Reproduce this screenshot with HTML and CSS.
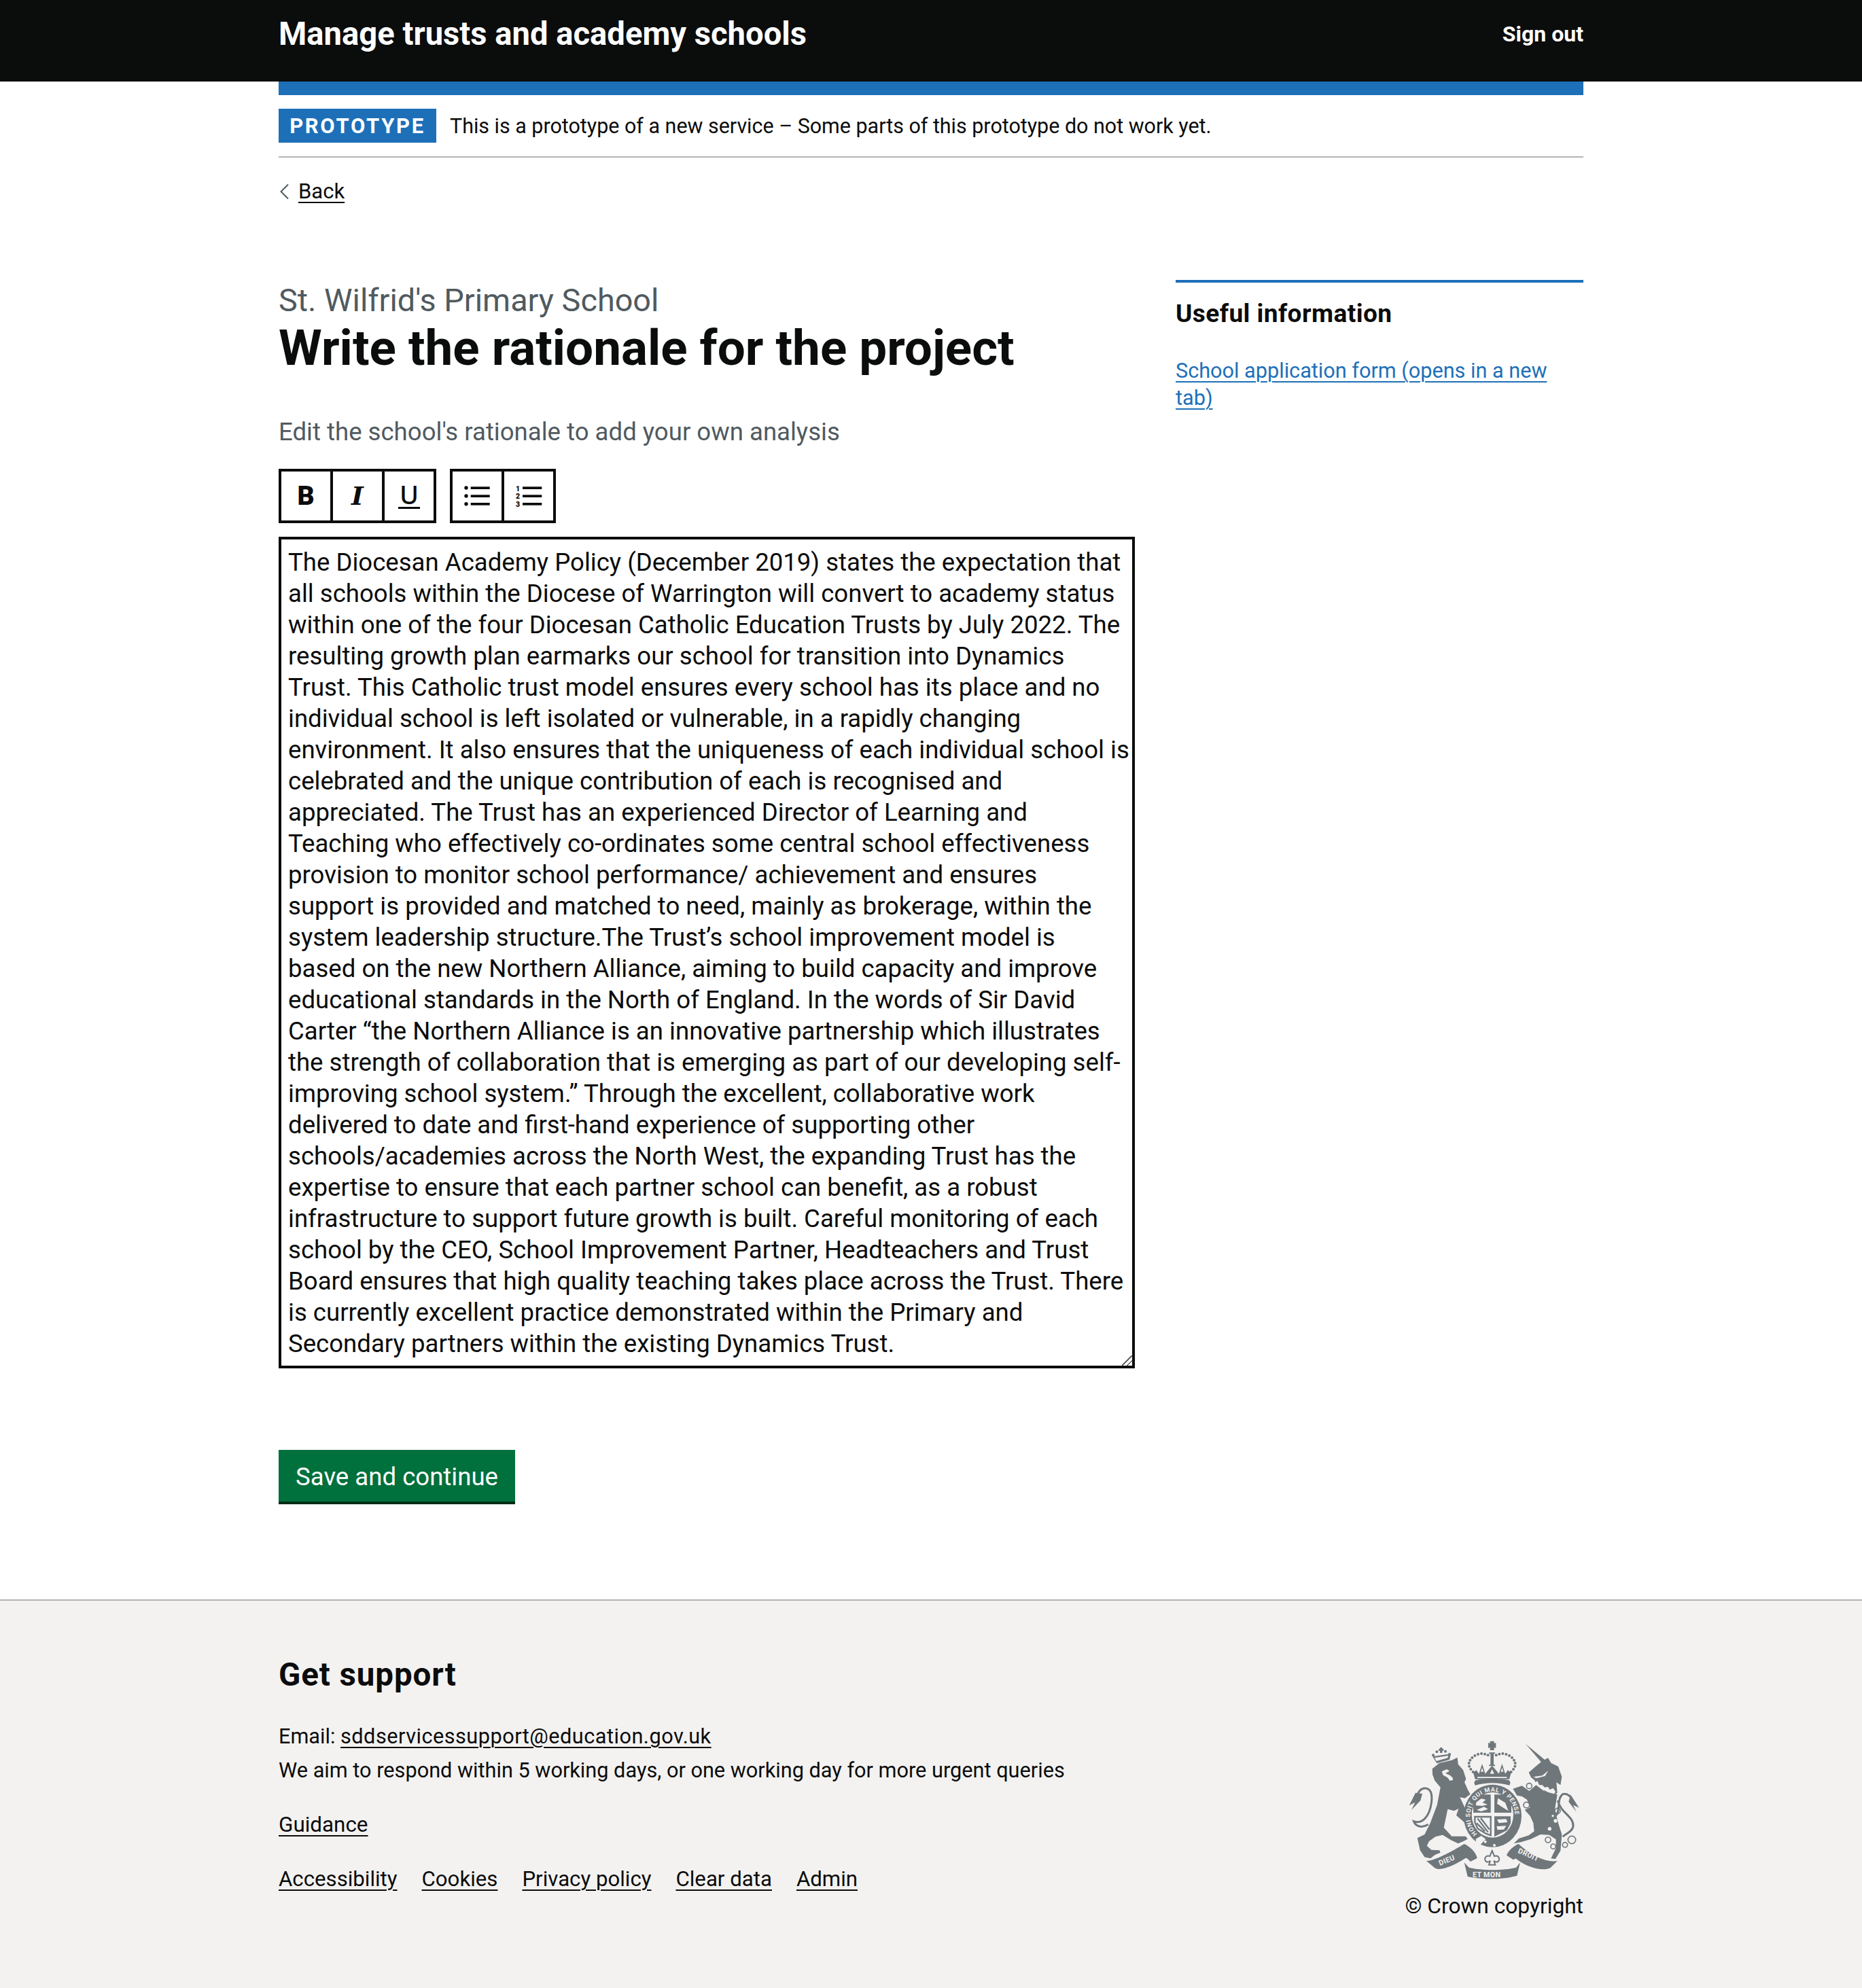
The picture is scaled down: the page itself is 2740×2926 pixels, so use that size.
FILE: index.html
```html
<!DOCTYPE html>
<html lang="en">
<head>
<meta charset="utf-8">
<title>Write the rationale for the project</title>
<link rel="stylesheet" href="styles.css">
</head>
<body>
<header class="site-header">
  <div class="container header-row">
    <a class="service-name" href="#">Manage trusts and academy schools</a>
    <a class="sign-out" href="#">Sign out</a>
  </div>
</header>
<div class="container">
  <div class="phase-banner">
    <strong class="tag">PROTOTYPE</strong>
    <span class="phase-text">This is a prototype of a new service – Some parts of this prototype do not work yet.</span>
  </div>
  <a class="back-link" href="#">
    <svg class="chevron" width="14" height="24" viewBox="0 0 14 24"><path d="M13 1.500 2.500 12 13 22.500" fill="none" stroke="#505a5f" stroke-width="2"/></svg>
    <span class="back-text">Back</span>
  </a>
  <main class="main-grid">
    <div class="main-col">
      <span class="caption">St. Wilfrid's Primary School</span>
      <h1 class="title">Write the rationale for the project</h1>
      <p class="hint">Edit the school's rationale to add your own analysis</p>
      <div class="toolbar">
        <div class="tool-group">
          <button class="tool tool-b" type="button">B</button>
          <button class="tool tool-i" type="button">I</button>
          <button class="tool tool-u" type="button"><span class="u-mark">U</span></button>
        </div>
        <div class="tool-group">
          <button class="tool" type="button" aria-label="Bullet list">
            <svg width="72" height="72" viewBox="0 0 72 72"><circle cx="20" cy="24" r="2.700"/><circle cx="20" cy="36" r="2.700"/><circle cx="20" cy="47.700" r="2.700"/><rect x="26.700" y="22.300" width="28" height="3.700"/><rect x="26.700" y="34.300" width="28" height="3.700"/><rect x="26.700" y="46" width="28" height="3.700"/></svg>
          </button>
          <button class="tool" type="button" aria-label="Numbered list">
            <svg width="72" height="72" viewBox="0 0 72 72"><text class="mini-num" x="20" y="28.500">1</text><text class="mini-num" x="20" y="40.300">2</text><text class="mini-num" x="20" y="52">3</text><rect x="27" y="22.300" width="28.300" height="3.700"/><rect x="27" y="34.300" width="28.300" height="3.700"/><rect x="27" y="46" width="28.300" height="3.700"/></svg>
          </button>
        </div>
      </div>
      <textarea class="rationale" wrap="off" rows="26" spellcheck="false">The Diocesan Academy Policy (December 2019) states the expectation that
all schools within the Diocese of Warrington will convert to academy status
within one of the four Diocesan Catholic Education Trusts by July 2022. The
resulting growth plan earmarks our school for transition into Dynamics
Trust. This Catholic trust model ensures every school has its place and no
individual school is left isolated or vulnerable, in a rapidly changing
environment. It also ensures that the uniqueness of each individual school is
celebrated and the unique contribution of each is recognised and
appreciated. The Trust has an experienced Director of Learning and
Teaching who effectively co-ordinates some central school effectiveness
provision to monitor school performance/ achievement and ensures
support is provided and matched to need, mainly as brokerage, within the
system leadership structure.The Trust’s school improvement model is
based on the new Northern Alliance, aiming to build capacity and improve
educational standards in the North of England. In the words of Sir David
Carter “the Northern Alliance is an innovative partnership which illustrates
the strength of collaboration that is emerging as part of our developing self-
improving school system.” Through the excellent, collaborative work
delivered to date and first-hand experience of supporting other
schools/academies across the North West, the expanding Trust has the
expertise to ensure that each partner school can benefit, as a robust
infrastructure to support future growth is built. Careful monitoring of each
school by the CEO, School Improvement Partner, Headteachers and Trust
Board ensures that high quality teaching takes place across the Trust. There
is currently excellent practice demonstrated within the Primary and
Secondary partners within the existing Dynamics Trust.</textarea>
      <button class="save" type="button">Save and continue</button>
    </div>
    <aside class="side-col">
      <h2 class="side-title">Useful information</h2>
      <a class="side-link" href="#">School application form (opens in a new tab)</a>
    </aside>
  </main>
</div>
<footer class="site-footer">
  <div class="container footer-row">
    <div class="footer-meta">
      <h2 class="footer-title">Get support</h2>
      <p class="footer-line">Email: <a class="footer-link footer-email" href="#">sddservicessupport@education.gov.uk</a></p>
      <p class="footer-line footer-note">We aim to respond within 5 working days, or one working day for more urgent queries</p>
      <p class="footer-line footer-guidance"><a class="footer-link" href="#">Guidance</a></p>
      <ul class="footer-links">
        <li><a class="footer-link" href="#">Accessibility</a></li>
        <li><a class="footer-link" href="#">Cookies</a></li>
        <li><a class="footer-link" href="#">Privacy policy</a></li>
        <li><a class="footer-link" href="#">Clear data</a></li>
        <li><a class="footer-link" href="#">Admin</a></li>
      </ul>
    </div>
    <div class="footer-crest">
      <svg class="crest" width="253.330" height="206.670" viewBox="100 60 760 620" role="img" aria-label="Royal coat of arms">
        <!-- Royal crown -->
        <path class="cf" d="M459 68h18v10l8-3v24l-8-3v12h-18v-12l-8 3V75l8 3z"/>
        <path class="cf" d="M455 118h26v6h-6v48h6v6h-26v-6h6v-48h-6z"/>
        <g class="cf">
          <circle cx="450" cy="130" r="6"/><circle cx="436" cy="125" r="6"/><circle cx="421" cy="123" r="6"/><circle cx="406" cy="126" r="6"/><circle cx="392" cy="132" r="6"/><circle cx="380" cy="141" r="6"/><circle cx="371" cy="152" r="6"/><circle cx="366" cy="165" r="6"/><circle cx="367" cy="179" r="6"/><circle cx="374" cy="192" r="6"/><circle cx="384" cy="204" r="6"/>
          <circle cx="486" cy="130" r="6"/><circle cx="500" cy="125" r="6"/><circle cx="515" cy="123" r="6"/><circle cx="530" cy="126" r="6"/><circle cx="544" cy="132" r="6"/><circle cx="556" cy="141" r="6"/><circle cx="565" cy="152" r="6"/><circle cx="570" cy="165" r="6"/><circle cx="569" cy="179" r="6"/><circle cx="562" cy="192" r="6"/><circle cx="552" cy="204" r="6"/>
        </g>
        <path class="cf" d="M385 208 398 196 410 212 424 168 438 212 454 192 468 176 482 192 498 212 512 168 526 212 538 196 552 208 544 236H393Z"/>
        <path class="cl" d="M403 226h130v5H403zM424 185l6 18h-12zM512 185l6 18h-12zM468 192l9 20h-18z"/>
        <path class="cf" d="M398 240c40-8 100-8 142 0 10 3 10 17 4 23-45-14-105-14-150 0-7-6-6-20 4-23Z"/>
        <!-- Lion -->
        <path class="cf" d="M204 190 235 165 290 152 315 140 318 170 340 195 353 235 346 250 362 285 372 302 348 320 326 316 348 362 368 405 350 432 338 420 310 396 320 366 300 376 272 368 255 450 290 488 352 488 360 500 340 511 318 520 286 505 250 482 218 490 190 510 180 530 200 548 236 550 240 560 216 570 196 586 170 580 150 550 138 496 170 480 195 430 225 350 240 272 215 242 205 215Z"/>
        <path class="cl" d="M246 202 268 192 280 200 262 210 284 220 296 240 282 242 270 228 252 218ZM272 220 292 226 296 240 280 242Z"/>
        <path class="cf" d="M205 136 286 124 280 150 224 166Z"/>
        <path class="cl" d="M214 142 274 132 272 142 222 156Z"/>
        <g class="cf"><circle cx="208" cy="130" r="6"/><circle cx="224" cy="115" r="6"/><circle cx="243" cy="110" r="6"/><circle cx="262" cy="113" r="6"/><circle cx="280" cy="126" r="6"/></g>
        <path class="cf" d="M238 96h10v6h6v8h-6v10h-10v-10h-6v-8h6z"/>
        <path class="cs" d="M186 436C150 458 126 436 122 422 160 436 192 400 200 340 206 300 196 276 172 276 152 276 140 296 134 318"/>
        <path class="cf" d="M130 296 102 352 128 338 112 372 152 330 160 300Z"/>
        <!-- Unicorn -->
        <path class="cf" d="M616 80 700 150 688 164Z"/>
        <path class="cf" d="M630 206 660 180 690 155 715 142 728 164 760 180 776 225 770 262 752 250 756 296 730 316 700 300 702 296 690 272 665 262 655 240 640 228Z"/>
        <path class="cl" d="M650 226 690 220 716 198 702 222 664 232Z"/>
        <path class="cl" d="M658 250 668 244 676 262 690 262 700 272 715 270 722 282 738 276 748 292 738 306 700 286 660 268Z"/>
        <path class="cf" d="M560 278 600 265 632 288 662 262 700 290 756 304 745 370 760 430 776 480 770 552 748 588 728 586 750 540 750 502 720 482 682 480 640 500 596 514 564 520 586 498 630 484 654 466 650 430 636 398 612 372 636 360 622 326 600 312 578 308Z"/>
        <g class="cl"><circle cx="722" cy="455" r="8"/><circle cx="748" cy="420" r="8"/><circle cx="736" cy="398" r="5"/></g>
        <g class="ch"><circle cx="632" cy="266" r="12"/><circle cx="620" cy="350" r="13"/><circle cx="757" cy="376" r="12"/><circle cx="715" cy="504" r="12"/><circle cx="738" cy="533" r="11"/><circle cx="790" cy="526" r="11"/><circle cx="820" cy="504" r="17"/></g>
        <path class="cs" d="M748 398C772 380 752 320 780 302 800 296 818 315 830 340M758 330C770 385 830 400 826 445 820 470 795 475 780 490"/>
        <path class="cf" d="M814 304 852 362 826 350 840 380 806 336Z"/>
        <!-- Garter and shield -->
        <ellipse class="cf" cx="470" cy="398" rx="128" ry="138"/>
        <ellipse class="cl" cx="470" cy="394" rx="92" ry="100"/>
        <path class="cf" d="M385 304H462V384H385ZM478 304H553V384H478ZM478 400H550V430L534 462 478 490Z"/>
        <path class="cs-thin" d="M392 402H462V484L440 476 404 454 392 425ZM404 410 450 470M418 408 456 458M400 430 436 466"/>
        <path class="cl" d="M398 338 420 322 440 326 426 340 448 348 424 354 396 352ZM400 372 432 358 450 368 420 378ZM494 320 526 340 540 376 514 360 490 344ZM490 414 530 412 536 426 498 430ZM488 444 530 442 520 458 492 460Z"/>
        <path id="garter-path" class="none" d="M406 481A99 108 0 1 1 534 481"/>
        <text class="garter-text"><textPath href="#garter-path" startOffset="1%">HONI SOIT QUI MAL Y PENSE</textPath></text>
        <circle class="cl" cx="438" cy="512" r="6"/><circle class="cl" cx="478" cy="528" r="6"/>
        <path class="cl" d="M396 500 420 486 440 500 414 528 398 520Z"/>
        <!-- Fleur de lis -->
        <path class="ce" d="M468 552 478 576C498 570 505 590 494 600 486 604 480 600 476 596L482 614H454L460 596C456 600 450 604 442 600 431 590 438 570 458 576Z"/>
        <!-- Motto ribbon -->
        <path class="cf" d="M178 597C220 595 290 555 345 522 375 535 400 565 402 585L372 600C362 588 354 582 350 585 310 612 240 645 215 628Z"/>
        <path class="cf" d="M345 604 366 626C420 640 520 640 574 626L592 604 578 662C520 680 420 680 360 666Z"/>
        <path class="cf" d="M756 597C710 605 640 575 585 522 560 530 535 560 532 572L562 592 572 586C620 625 690 645 725 628Z"/>
        <text class="motto" transform="translate(238 618) rotate(-22)">DIEU</text>
        <text class="motto" x="382" y="668">ET MON</text>
        <text class="motto" transform="translate(580 560) rotate(24)">DROIT</text>
      </svg>
      <p class="copyright">© Crown copyright</p>
    </div>
  </div>
</footer>
</body>
</html>
```
FILE: styles.css
```css
* { box-sizing: border-box; }
body {
  margin: 0;
  font-family: Roboto, "Noto Sans", Arial, sans-serif;
  color: #0b0c0c;
  background: #fff;
}
.container { width: 1920px; margin: 0 auto; }
a { color: inherit; }

.site-header { background: #0b0c0c; height: 120px; }
.header-row { display: flex; justify-content: space-between; align-items: flex-start; }
.service-name {
  color: #fff;
  font-size: 47.200px;
  line-height: 56px;
  font-weight: 700;
  text-decoration: none;
  padding-top: 22px;
}
.sign-out {
  color: #fff;
  font-size: 32px;
  line-height: 40px;
  font-weight: 700;
  text-decoration: none;
  padding-top: 30px;
}

.phase-banner {
  border-top: 20px solid #1d70b8;
  border-bottom: 2px solid #b1b4b6;
  padding: 20px 0;
  display: flex;
  align-items: center;
  gap: 20px;
}
.tag {
  background: #1d70b8;
  color: #fff;
  height: 50px;
  width: 232px;
  display: flex;
  align-items: center;
  justify-content: center;
  font-size: 31px;
  font-weight: 700;
  letter-spacing: 2.700px;
}
.phase-text { font-size: 30.450px; line-height: 40px; padding-top: 1px; }

.back-link {
  display: flex;
  align-items: center;
  margin-top: 30px;
  height: 40px;
  text-decoration: none;
}
.chevron { margin: 0 14px 0 1px; }
.back-text {
  font-size: 31px;
  line-height: 40px;
  text-decoration: underline;
  text-decoration-thickness: 2px;
  text-underline-offset: 5px;
}

.main-grid {
  display: grid;
  grid-template-columns: 1260px 600px;
  column-gap: 60px;
  margin-top: 110px;
  align-items: start;
}
.caption {
  display: block;
  color: #505a5f;
  font-size: 46.800px;
  line-height: 60px;
}
.title {
  margin: 0;
  padding-top: 1px;
  font-size: 72.800px;
  line-height: 78px;
  font-weight: 700;
}
.hint {
  margin: 62px 0 0;
  color: #505a5f;
  font-size: 36.600px;
  line-height: 46px;
}

.toolbar { display: flex; gap: 20px; margin-top: 31px; }
.tool-group { display: flex; border: 4px solid #0b0c0c; gap: 4px; background: #0b0c0c; }
.tool {
  width: 72px;
  height: 72px;
  border: 0;
  padding: 0;
  margin: 0;
  background: #fff;
  color: #0b0c0c;
  display: flex;
  align-items: center;
  justify-content: center;
  fill: #0b0c0c;
}
.tool-b { font: 900 39px/1 Roboto, sans-serif; }
.tool-i { font: italic 700 38px/1 "DejaVu Serif", serif; }
.tool-u { font: 500 38px/1 "Noto Sans", sans-serif; }
.u-mark { border-bottom: 3.500px solid #0b0c0c; padding: 0 2px 2px; line-height: 33px; }
.mini-num { font: 900 10.500px Roboto, sans-serif; text-anchor: middle; }

.rationale {
  display: block;
  width: 1260px;
  height: 1224px;
  margin-top: 20px;
  padding: 11px 0 9px 10px;
  border: 4px solid #0b0c0c;
  border-radius: 0;
  font-family: Roboto, "Noto Sans", sans-serif;
  font-size: 36.600px;
  line-height: 46px;
  color: #0b0c0c;
  background: #fff;
  overflow: auto;
  outline: none;
}
.rationale::-webkit-resizer {
  background: linear-gradient(135deg, transparent 45%, #6a6a6a 45% 54%, transparent 54% 71%, #6a6a6a 71% 79%, transparent 79%);
}

.save {
  display: block;
  margin: 120px 0 0;
  width: 348px;
  height: 80px;
  padding: 3px 0 0;
  border: 0;
  border-bottom: 4px solid #002d18;
  background: #00703c;
  color: #fff;
  font-family: Roboto, sans-serif;
  font-size: 36.600px;
  line-height: 46px;
}

.side-col { border-top: 4px solid #1d70b8; padding-top: 23px; }
.side-title {
  margin: 0;
  font-size: 37px;
  line-height: 46px;
  font-weight: 700;
  letter-spacing: .450px;
}
.side-link {
  display: block;
  margin-top: 41px;
  color: #1d70b8;
  font-size: 30.650px;
  line-height: 40px;
  text-decoration-thickness: 2px;
  text-underline-offset: 5px;
}

.site-footer {
  margin-top: 140px;
  border-top: 2px solid #b1b4b6;
  background: #f3f2f1;
  padding: 81px 0 100.330px;
}
.footer-row { display: flex; justify-content: space-between; align-items: flex-start; }
.footer-title {
  margin: 0 0 43px;
  font-size: 47.500px;
  line-height: 56px;
  font-weight: 700;
  letter-spacing: .900px;
}
.footer-line { margin: 0; font-size: 30.700px; line-height: 40px; }
.footer-note { margin-top: 10px; }
.footer-guidance { margin-top: 40px; font-size: 31.400px; }
.footer-link { text-decoration-thickness: 2px; text-underline-offset: 5px; }
.footer-email { letter-spacing: .480px; }
.footer-links {
  list-style: none;
  margin: 40px 0 0;
  padding: 0;
  display: flex;
  gap: 36px;
  font-size: 31.200px;
  line-height: 40px;
}

.footer-crest { display: flex; flex-direction: column; align-items: flex-end; margin-top: 123px; }
.crest { display: block; margin-right: 3.700px; }
.copyright { margin: 19px 0 0; font-size: 31.700px; line-height: 40px; }

.cf { fill: #6f777b; }
.cl { fill: #f3f2f1; }
.cs { fill: none; stroke: #6f777b; stroke-width: 9; }
.cs-thin { fill: none; stroke: #6f777b; stroke-width: 7; }
.ch { fill: #f3f2f1; stroke: #6f777b; stroke-width: 5; }
.ce { fill: #f3f2f1; stroke: #6f777b; stroke-width: 6; }
.none { fill: none; }
.garter-text { font: 700 27px Roboto, sans-serif; fill: #f3f2f1; letter-spacing: 2px; }
.motto { font: 700 32px Roboto, sans-serif; fill: #f3f2f1; letter-spacing: 1px; }
```
